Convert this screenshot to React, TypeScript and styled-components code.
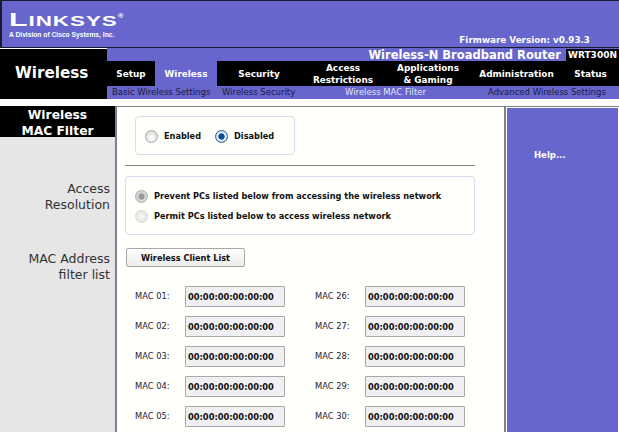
import React from 'react';
import styled, { createGlobalStyle } from 'styled-components';

const GlobalStyle = createGlobalStyle`
  html, body {
    margin: 0;
    padding: 0;
    background: #fff;
    overflow: hidden;
  }
`;

const purple = '#6666cc';

const Page = styled.div`
  width: 619px;
  height: 432px;
  overflow: hidden;
  font-family: "DejaVu Sans", Verdana, sans-serif;
`;

const Banner = styled.div`
  height: 48px;
  box-sizing: border-box;
  background: ${purple};
  border: 1px solid #1a1a33;
  border-width: 1px 0 1px 1px;
  box-shadow: inset 1px 0 0 #1a1a33;
  display: flex;
  justify-content: space-between;
  padding: 11px 29px 0 8px;
`;

const Logo = styled.div`
  color: #fff;
  font-family: "Liberation Sans", Arial, sans-serif;
`;

const LogoMark = styled.div`
  font-size: 14px;
  font-weight: 700;
  line-height: 15px;
  letter-spacing: 0.6px;
  transform: scaleX(1.6);
  transform-origin: left center;
  white-space: nowrap;

  b {
    font-size: 19px;
  }

  sup {
    font-size: 5px;
    vertical-align: 8px;
    line-height: 0;
  }
`;

const LogoSub = styled.div`
  font-size: 6.7px;
  font-weight: 700;
  line-height: 8px;
  margin-top: 2px;
`;

const Firmware = styled.div`
  align-self: flex-end;
  color: #fff;
  font-size: 8.8px;
  font-weight: 700;
  line-height: 12px;
  margin-bottom: 1px;
`;

const NavArea = styled.div`
  display: flex;
  height: 51px;
`;

const SectionName = styled.div`
  flex: 0 0 107px;
  background: #000;
  color: #fff;
  font-size: 15.2px;
  font-weight: 700;
  line-height: 20px;
  padding: 14px 0 0 15px;
  box-sizing: border-box;
  margin-top: 1px;
`;

const NavColumn = styled.div`
  flex: 1;
  min-width: 0;
  background: ${purple};
  display: flex;
  flex-direction: column;
`;

const ProductRow = styled.div`
  height: 13px;
  display: flex;
  justify-content: flex-end;
  align-items: flex-end;
  color: #fff;
  font-size: 11.5px;
  font-weight: 700;
`;

const ProductName = styled.div`
  margin-right: 5px;
  line-height: 12px;
`;

const ModelName = styled.div`
  width: 53px;
  height: 12px;
  background: #000;
  font-size: 9px;
  line-height: 12px;
  text-align: center;
`;

const Tabs = styled.div`
  display: flex;
  height: 25px;
  background: #000;
`;

const Tab = styled.div<{ $w: number; $active?: boolean }>`
  flex: 0 0 ${(p) => p.$w}px;
  background: ${(p) => (p.$active ? purple : '#000')};
  color: #fff;
  font-size: 8.9px;
  font-weight: 700;
  line-height: 12px;
  text-align: center;
  display: flex;
  align-items: center;
  justify-content: center;
`;

const SubNav = styled.div`
  display: flex;
  height: 13px;
  align-items: center;
  padding-left: 5px;
`;

const SubItem = styled.div<{ $w: number; $current?: boolean }>`
  flex: 0 0 ${(p) => p.$w}px;
  color: ${(p) => (p.$current ? '#e4e4f8' : '#1a1a40')};
  font-size: 8.5px;
  line-height: 13px;
  white-space: nowrap;
`;

const Body = styled.div`
  display: flex;
  margin-top: 7px;
  height: 326px;
  border-top: 1px solid #808080;
  box-sizing: border-box;
`;

const Sidebar = styled.div`
  flex: 0 0 115px;
  margin-top: -1px;
  background: #e6e6e6;
  border-right: 2px solid #808088;
  display: flex;
  flex-direction: column;
`;

const SideTitle = styled.div`
  background: #000;
  color: #fff;
  font-size: 12.3px;
  font-weight: 700;
  line-height: 16px;
  text-align: center;
  height: 30px;
  padding-top: 1px;
`;

const SideLabel = styled.div<{ $top: number }>`
  margin-top: ${(p) => p.$top}px;
  padding-right: 5px;
  color: #333;
  font-size: 12.5px;
  line-height: 16px;
  text-align: right;
`;

const Main = styled.div`
  flex: 0 0 389px;
  background: #fffffb;
  border-right: 2px solid #808088;
  padding: 9px 0 0 8px;
  box-sizing: border-box;
`;

const Panel = styled.div`
  box-sizing: border-box;
  border: 1px solid #d4deee;
  border-radius: 4px;
`;

const StatusPanel = styled(Panel)`
  width: 160px;
  height: 39px;
  margin-left: 10px;
  display: flex;
  align-items: center;
  gap: 14px;
  padding: 1px 0 0 9px;
`;

const Divider = styled.div`
  width: 350px;
  border-top: 1px solid #808080;
  margin: 10px 0;
`;

const ResolutionPanel = styled(Panel)`
  width: 350px;
  height: 59px;
  display: flex;
  flex-direction: column;
  justify-content: center;
  gap: 7px;
  padding: 1px 0 0 9px;
`;

const Option = styled.label`
  display: inline-flex;
  align-items: center;
  gap: 6px;
  color: #111;
  font-size: 8.2px;
  font-weight: 700;
  line-height: 13px;
`;

const Radio = styled.input.attrs({ type: 'radio' })`
  appearance: none;
  width: 13px;
  height: 13px;
  margin: 0;
  border-radius: 50%;
  border: 1px solid #a8a8a8;
  background: radial-gradient(circle at 50% 60%, #fafafa 20%, #c8c8c8 100%);
  box-sizing: border-box;

  &:checked {
    border-color: #3a5d85;
    background: radial-gradient(circle, #0a4c96 0 36%, #dfeaf5 44% 56%, #7fa5c8 100%);
  }

  &:disabled {
    border-color: #d8d8d8;
    background: radial-gradient(circle, #f2f2f2 20%, #dedede 100%);
  }

  &:disabled:checked {
    border-color: #b0b0b0;
    background: radial-gradient(circle, #9a9a9a 0 36%, #d6d6d6 44% 60%, #c0c0c0 100%);
  }
`;

const ClientButton = styled.button`
  display: block;
  width: 119px;
  height: 19px;
  margin: 13px 0 0 1px;
  padding: 0;
  box-sizing: border-box;
  border: 1px solid #a8a8a8;
  border-radius: 2px;
  background: linear-gradient(#fdfdfb, #ececec);
  color: #111;
  font-family: inherit;
  font-size: 8.2px;
  font-weight: 700;
`;

const MacGrid = styled.div`
  display: grid;
  grid-template-columns: 150px 150px;
  column-gap: 30px;
  row-gap: 9px;
  margin: 19px 0 0 10px;
`;

const MacField = styled.div`
  display: flex;
`;

const MacLabel = styled.div`
  flex: 0 0 50px;
  color: #223;
  font-size: 8.3px;
  line-height: 21px;
`;

const MacInput = styled.div`
  flex: 0 0 100px;
  box-sizing: border-box;
  height: 21px;
  border: 1px solid #a8a8a8;
  border-radius: 1px;
  background: #f0f0f2;
  color: #111;
  font-size: 8.3px;
  font-weight: 700;
  line-height: 20px;
  padding-left: 2px;
`;

const HelpColumn = styled.div`
  flex: 1;
  min-width: 0;
  padding: 1px 1px 0 1px;
  display: flex;
`;

const HelpPanel = styled.div`
  flex: 1;
  background: ${purple};
  color: #fff;
  font-size: 8.5px;
  font-weight: 700;
  line-height: 12px;
  padding: 41px 0 0 27px;
`;

const macRows = [
  ['01', '26'],
  ['02', '27'],
  ['03', '28'],
  ['04', '29'],
  ['05', '30'],
];

const App: React.FC = () => (
  <Page>
    <GlobalStyle />
    <Banner>
      <Logo>
        <LogoMark>
          <b>L</b>INKSYS<sup>®</sup>
        </LogoMark>
        <LogoSub>A Division of Cisco Systems, Inc.</LogoSub>
      </Logo>
      <Firmware>Firmware Version: v0.93.3</Firmware>
    </Banner>
    <NavArea>
      <SectionName>Wireless</SectionName>
      <NavColumn>
        <ProductRow>
          <ProductName>Wireless-N Broadband Router</ProductName>
          <ModelName>WRT300N</ModelName>
        </ProductRow>
        <Tabs>
          <Tab $w={48}>Setup</Tab>
          <Tab $w={62} $active>Wireless</Tab>
          <Tab $w={84}>Security</Tab>
          <Tab $w={84}>Access<br />Restrictions</Tab>
          <Tab $w={86}>Applications<br />&amp; Gaming</Tab>
          <Tab $w={91}>Administration</Tab>
          <Tab $w={57}>Status</Tab>
        </Tabs>
        <SubNav>
          <SubItem $w={110}>Basic Wireless Settings</SubItem>
          <SubItem $w={123}>Wireless Security</SubItem>
          <SubItem $w={143} $current>Wireless MAC Filter</SubItem>
          <SubItem $w={126}>Advanced Wireless Settings</SubItem>
        </SubNav>
      </NavColumn>
    </NavArea>
    <Body>
      <Sidebar>
        <SideTitle>Wireless<br />MAC Filter</SideTitle>
        <SideLabel $top={44}>Access<br />Resolution</SideLabel>
        <SideLabel $top={38}>MAC Address<br />filter list</SideLabel>
      </Sidebar>
      <Main>
        <StatusPanel>
          <Option>
            <Radio name="mac-filter" />
            Enabled
          </Option>
          <Option>
            <Radio name="mac-filter" defaultChecked />
            Disabled
          </Option>
        </StatusPanel>
        <Divider />
        <ResolutionPanel>
          <Option>
            <Radio name="resolution" defaultChecked disabled />
            Prevent PCs listed below from accessing the wireless network
          </Option>
          <Option>
            <Radio name="resolution" disabled />
            Permit PCs listed below to access wireless network
          </Option>
        </ResolutionPanel>
        <ClientButton>Wireless Client List</ClientButton>
        <MacGrid>
          {macRows.map(([a, b]) => (
            <React.Fragment key={a}>
              <MacField>
                <MacLabel>MAC {a}:</MacLabel>
                <MacInput>00:00:00:00:00:00</MacInput>
              </MacField>
              <MacField>
                <MacLabel>MAC {b}:</MacLabel>
                <MacInput>00:00:00:00:00:00</MacInput>
              </MacField>
            </React.Fragment>
          ))}
        </MacGrid>
      </Main>
      <HelpColumn>
        <HelpPanel>Help...</HelpPanel>
      </HelpColumn>
    </Body>
  </Page>
);

export default App;
